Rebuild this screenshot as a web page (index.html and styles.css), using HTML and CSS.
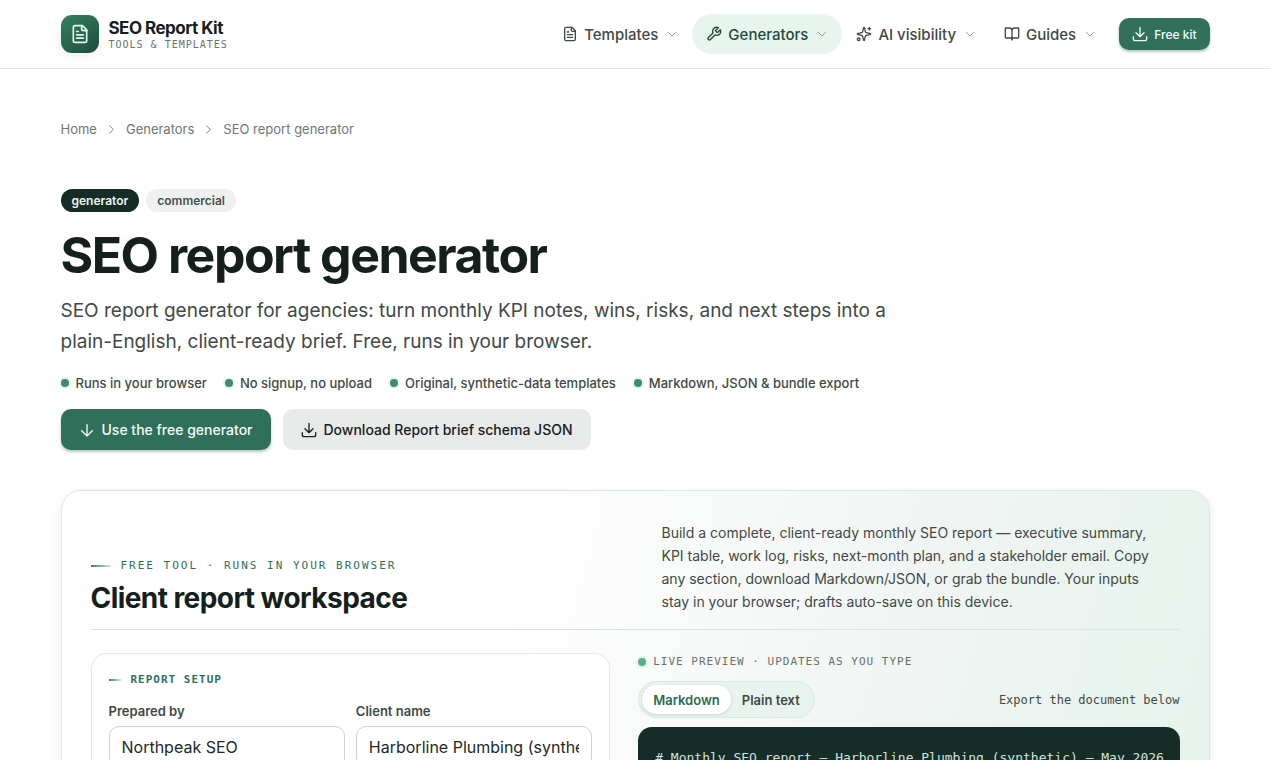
FILE: index.html
```html
<!DOCTYPE html>
<html lang="en">
<head>
  <meta charset="UTF-8">
  <meta name="viewport" content="width=device-width, initial-scale=1.0">
  <title>SEO report generator</title>
  <link rel="stylesheet" href="styles.css">
</head>
<body>
  <!-- shared icons -->
  <svg class="sprite" aria-hidden="true">
    <symbol id="i-file" viewBox="0 0 24 24"><path d="M15 2H6a2 2 0 0 0-2 2v16a2 2 0 0 0 2 2h12a2 2 0 0 0 2-2V7Z"/><path d="M14 2v4a2 2 0 0 0 2 2h4M10 9H8M16 13H8M16 17H8"/></symbol>
    <symbol id="i-wrench" viewBox="0 0 24 24"><path d="M14.7 6.3a1 1 0 0 0 0 1.4l1.6 1.6a1 1 0 0 0 1.4 0l3.77-3.77a6 6 0 0 1-7.94 7.94l-6.91 6.91a2.12 2.12 0 0 1-3-3l6.91-6.91a6 6 0 0 1 7.94-7.94l-3.76 3.76z"/></symbol>
    <symbol id="i-sparkles" viewBox="0 0 24 24"><path d="M9.94 15.5A2 2 0 0 0 8.5 14.06l-6.13-1.58a.5.5 0 0 1 0-.96L8.5 9.94A2 2 0 0 0 9.94 8.5l1.58-6.13a.5.5 0 0 1 .96 0l1.58 6.13a2 2 0 0 0 1.44 1.44l6.13 1.58a.5.5 0 0 1 0 .96l-6.13 1.58a2 2 0 0 0-1.44 1.44l-1.58 6.13a.5.5 0 0 1-.96 0zM20 2v4M22 4h-4"/><circle cx="4" cy="20" r="2"/></symbol>
    <symbol id="i-book" viewBox="0 0 24 24"><path d="M12 7v14M3 18a1 1 0 0 1-1-1V4a1 1 0 0 1 1-1h5a4 4 0 0 1 4 4 4 4 0 0 1 4-4h5a1 1 0 0 1 1 1v13a1 1 0 0 1-1 1h-6a3 3 0 0 0-3 3 3 3 0 0 0-3-3z"/></symbol>
    <symbol id="i-download" viewBox="0 0 24 24"><path d="M12 2v14M6 10l6 6 6-6M2 16v3a3 3 0 0 0 3 3h14a3 3 0 0 0 3-3v-3"/></symbol>
    <symbol id="i-arrow" viewBox="0 0 24 24"><path d="M12 4v17M4 13l8 8 8-8"/></symbol>
    <symbol id="i-down" viewBox="0 0 24 24"><path d="m5 9 7 7 7-7"/></symbol>
    <symbol id="i-right" viewBox="0 0 24 24"><path d="m8 4 8 8-8 8"/></symbol>
  </svg>

  <header class="site-header">
    <div class="container header-row">
      <a class="brand" href="#">
        <span class="brand-mark"><svg class="icon icon-lg"><use href="#i-file"/></svg></span>
        <span class="brand-text">
          <span class="brand-name">SEO Report Kit</span>
          <span class="brand-sub">TOOLS &amp; TEMPLATES</span>
        </span>
      </a>
      <nav class="nav" aria-label="Main">
        <button class="nav-item"><svg class="icon"><use href="#i-file"/></svg>Templates<svg class="icon chev"><use href="#i-down"/></svg></button>
        <button class="nav-item active"><svg class="icon"><use href="#i-wrench"/></svg>Generators<svg class="icon chev"><use href="#i-down"/></svg></button>
        <button class="nav-item"><svg class="icon"><use href="#i-sparkles"/></svg>AI visibility<svg class="icon chev"><use href="#i-down"/></svg></button>
        <button class="nav-item"><svg class="icon"><use href="#i-book"/></svg>Guides<svg class="icon chev"><use href="#i-down"/></svg></button>
        <a class="btn btn-primary btn-small" href="#"><svg class="icon"><use href="#i-download"/></svg>Free kit</a>
      </nav>
    </div>
  </header>

  <main class="container">
    <nav class="crumbs" aria-label="Breadcrumb">
      <a href="#">Home</a>
      <svg class="icon icon-sm"><use href="#i-right"/></svg>
      <a href="#">Generators</a>
      <svg class="icon icon-sm"><use href="#i-right"/></svg>
      <span>SEO report generator</span>
    </nav>

    <section class="hero">
      <div class="tags">
        <span class="tag tag-dark">generator</span>
        <span class="tag">commercial</span>
      </div>
      <h1>SEO report generator</h1>
      <p class="lead">SEO report generator for agencies: turn monthly KPI notes, wins, risks, and next steps into a plain-English, client-ready brief. Free, runs in your browser.</p>
      <ul class="trust">
        <li>Runs in your browser</li>
        <li>No signup, no upload</li>
        <li>Original, synthetic-data templates</li>
        <li>Markdown, JSON &amp; bundle export</li>
      </ul>
      <div class="actions">
        <a class="btn btn-primary" href="#workspace"><svg class="icon"><use href="#i-arrow"/></svg>Use the free generator</a>
        <a class="btn btn-plain" href="#"><svg class="icon"><use href="#i-download"/></svg>Download Report brief schema JSON</a>
      </div>
    </section>

    <section class="workspace" id="workspace">
      <div class="workspace-head">
        <div>
          <p class="eyebrow">FREE TOOL · RUNS IN YOUR BROWSER</p>
          <h2>Client report workspace</h2>
        </div>
        <p class="intro">Build a complete, client-ready monthly SEO report — executive summary, KPI table, work log, risks, next-month plan, and a stakeholder email. Copy any section, download Markdown/JSON, or grab the bundle. Your inputs stay in your browser; drafts auto-save on this device.</p>
      </div>

      <div class="workspace-body">
        <form class="panel">
          <h3 class="eyebrow eyebrow-short">REPORT SETUP</h3>
          <div class="fields">
            <div class="field">
              <label for="prepared">Prepared by</label>
              <input id="prepared" type="text" value="Northpeak SEO">
            </div>
            <div class="field">
              <label for="client">Client name</label>
              <input id="client" type="text" value="Harborline Plumbing (synthetic)">
            </div>
          </div>
        </form>

        <div class="preview">
          <p class="live">LIVE PREVIEW · UPDATES AS YOU TYPE</p>
          <div class="preview-bar">
            <div class="tabs">
              <button class="tab selected">Markdown</button>
              <button class="tab">Plain text</button>
            </div>
            <span class="hint">Export the document below</span>
          </div>
          <pre class="output"># Monthly SEO report — Harborline Plumbing (synthetic) — May 2026</pre>
        </div>
      </div>
    </section>
  </main>
</body>
</html>
```
FILE: styles.css
```css
* {
  box-sizing: border-box;
}
body {
  margin: 0;
  font-family: Inter, "Liberation Sans", sans-serif;
  font-size: 15px;
  color: #414946;
  background: #fefffe;
}
h1, h2, h3, p, ul {
  margin: 0;
  padding: 0;
}
a {
  color: inherit;
  text-decoration: none;
}
button {
  font: inherit;
  color: inherit;
  border: 0;
  background: none;
  cursor: pointer;
}
.sprite {
  display: none;
}
.icon {
  width: 16px;
  height: 16px;
  flex: none;
  fill: none;
  stroke: currentColor;
  stroke-width: 2;
  stroke-linecap: round;
  stroke-linejoin: round;
}
.icon-lg {
  width: 20px;
  height: 20px;
}
.icon-sm {
  width: 11px;
  height: 11px;
}
.container {
  width: calc(100% - 48px);
  max-width: 1149px;
  margin: 0 auto;
}

/* header */
.site-header {
  border-bottom: 1px solid #e4e8e6;
}
.header-row {
  display: flex;
  align-items: center;
  justify-content: space-between;
  height: 68px;
}
.brand {
  display: flex;
  align-items: center;
  gap: 10px;
}
.brand-mark {
  display: grid;
  place-items: center;
  width: 38px;
  height: 38px;
  border-radius: 11px;
  color: #e6f7ef;
  background: linear-gradient(145deg, #348064, #1d4c3b);
  box-shadow: 0 2px 8px rgba(40, 110, 85, 0.12);
}
.brand-text {
  display: flex;
  flex-direction: column;
}
.brand-name {
  font-size: 17px;
  line-height: 20px;
  font-weight: 700;
  letter-spacing: -0.03em;
  color: #14211d;
}
.brand-sub {
  font: 10px/13px "DejaVu Sans Mono", monospace;
  letter-spacing: 1px;
  color: #6b7370;
}
.nav {
  display: flex;
  align-items: center;
}
.nav-item {
  display: flex;
  align-items: center;
  gap: 6px;
  height: 40px;
  padding: 0 14px;
  border-radius: 20px;
  font-weight: 500;
}
.nav-item.active {
  color: #1f4a3a;
  background: #e8f4ee;
}
.chev {
  width: 12px;
  height: 12px;
  margin-left: 2px;
  color: #8f9794;
}

/* buttons */
.btn {
  display: flex;
  align-items: center;
  gap: 7px;
  height: 41px;
  padding: 0 18px;
  border-radius: 10px;
  font-size: 14px;
  font-weight: 500;
  white-space: nowrap;
}
.btn-primary {
  color: #f2fbf7;
  background: #30705a;
  box-shadow: 0 2px 3px rgba(32, 90, 70, 0.35);
}
.btn-plain {
  color: #16211d;
  background: #e8eae9;
}
.btn-small {
  height: 32px;
  margin-left: 9px;
  padding: 0 13px;
  gap: 6px;
  font-size: 12px;
}

/* hero */
.crumbs {
  display: flex;
  align-items: center;
  gap: 9px;
  padding-top: 50px;
  font-size: 13px;
  line-height: 20px;
  color: #707774;
}
.tags {
  display: flex;
  gap: 7px;
  margin-top: 50px;
}
.tag {
  padding: 0 11px;
  border-radius: 12px;
  font-size: 12px;
  line-height: 23px;
  font-weight: 600;
  color: #48504d;
  background: #eef1ef;
}
.tag-dark {
  color: #e9f5f0;
  background: #152d26;
}
h1 {
  margin-top: 14px;
  font-size: 50px;
  line-height: 58px;
  font-weight: 700;
  letter-spacing: -0.03em;
  color: #15201c;
}
.lead {
  max-width: 850px;
  margin-top: 11px;
  font-size: 19px;
  line-height: 31px;
}
.trust {
  display: flex;
  flex-wrap: wrap;
  gap: 6px 18px;
  margin-top: 16px;
  list-style: none;
  font-size: 13px;
  line-height: 20px;
  font-weight: 500;
}
.trust li {
  display: flex;
  align-items: center;
  gap: 7px;
}
.trust li::before,
.live::before {
  content: "";
  width: 8px;
  height: 8px;
  border-radius: 50%;
  background: #3f8b6d;
  box-shadow: 0 0 0 2px #e1f5ec;
}
.actions {
  display: flex;
  flex-wrap: wrap;
  gap: 12px;
  margin-top: 16px;
}

/* workspace */
.workspace {
  margin: 40px 0 48px;
  padding: 30px 29px;
  border: 1px solid #dde7e3;
  border-radius: 20px;
  background: linear-gradient(105deg, #fefffe 38%, #f1f5f3 68%, #e4f3ec);
  box-shadow: 0 4px 12px rgba(30, 60, 50, 0.08);
}
.workspace-head {
  display: grid;
  grid-template-columns: 1fr 1fr;
  gap: 53px;
  align-items: end;
  padding-bottom: 16px;
  border-bottom: 1px solid #dde3e0;
}
.eyebrow {
  display: flex;
  align-items: center;
  gap: 10px;
  font: 11px/16px "DejaVu Sans Mono", monospace;
  letter-spacing: 2px;
  color: #2f7058;
}
.eyebrow::before {
  content: "";
  width: 20px;
  height: 2px;
  background: linear-gradient(90deg, #3b8268, #cfe6dc);
}
.eyebrow-short {
  font-weight: 700;
  letter-spacing: 1px;
}
.eyebrow-short::before {
  width: 12px;
}
h2 {
  margin-top: 9px;
  font-size: 28px;
  line-height: 30px;
  font-weight: 700;
  letter-spacing: -0.02em;
  color: #15201c;
}
.intro {
  max-width: 505px;
  font-size: 14px;
  line-height: 23px;
}
.workspace-body {
  display: grid;
  grid-template-columns: 24fr 25fr;
  gap: 28px;
  margin-top: 23px;
}
.panel {
  min-width: 0;
  padding: 18px 17px;
  border: 1px solid #e3e8e5;
  border-radius: 15px;
  background: #fefffe;
}
.fields {
  display: grid;
  grid-template-columns: 1fr 1fr;
  gap: 11px;
  margin-top: 13px;
}
.field {
  min-width: 0;
}
.field label {
  display: block;
  font-size: 13px;
  line-height: 20px;
  font-weight: 600;
}
.field input {
  width: 100%;
  height: 42px;
  margin-top: 5px;
  padding: 0 12px;
  border: 1px solid #cdd3d0;
  border-radius: 10px;
  font: 16px Inter, "Liberation Sans", sans-serif;
  color: #1d2925;
  background: #fff;
}
.preview {
  min-width: 0;
}
.live {
  display: flex;
  align-items: center;
  gap: 7px;
  font: 11px/18px "DejaVu Sans Mono", monospace;
  letter-spacing: 1px;
  color: #66706c;
}
.live::before {
  background: #55b08e;
}
.preview-bar {
  display: flex;
  align-items: center;
  justify-content: space-between;
  margin: 10px 0 9px;
}
.tabs {
  display: flex;
  padding: 3px;
  border: 1px solid #d7e9e0;
  border-radius: 19px;
  background: #e8f3ed;
}
.tab {
  height: 29px;
  padding: 0 11px;
  border-radius: 15px;
  font-size: 13px;
  font-weight: 600;
}
.tab.selected {
  color: #2b6a53;
  background: #fff;
  box-shadow: 0 1px 3px rgba(20, 60, 45, 0.16);
}
.hint {
  font: 12px/20px "DejaVu Sans Mono", monospace;
}
.output {
  min-height: 200px;
  margin: 0;
  padding: 20px 17px;
  border-radius: 14px;
  overflow: hidden;
  font: 13px/22px "DejaVu Sans Mono", monospace;
  color: #cfe3da;
  background: #152d26;
}
```
